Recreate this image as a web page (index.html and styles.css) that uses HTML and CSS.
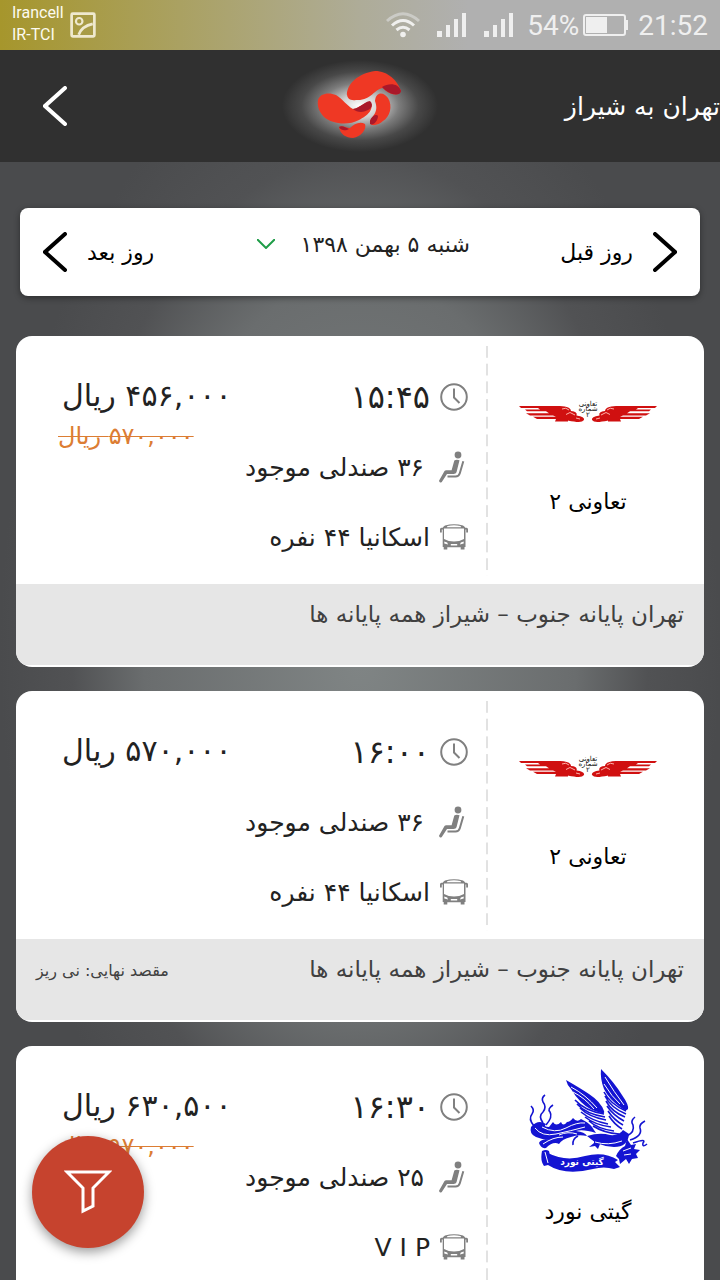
FILE: index.html
```html
<!DOCTYPE html>
<html lang="fa" dir="rtl">
<head>
    <meta charset="UTF-8">
    <meta name="viewport" content="width=device-width, initial-scale=1.0">
    <title>تهران به شیراز</title>
    <link rel="stylesheet" href="styles.css">
</head>
<body>
    <!-- Shared icons -->
    <svg class="sprite" aria-hidden="true">
        <symbol id="icon-clock" viewBox="0 0 28 28">
            <circle cx="14" cy="14" r="12.8" fill="none" stroke="#808080" stroke-width="2"/>
            <path d="M14 5.500V14.500L19.500 20" fill="none" stroke="#808080" stroke-width="2"/>
        </symbol>
        <symbol id="icon-seat" viewBox="0 -1 30 34">
            <g fill="#808080">
                <circle cx="20" cy="4" r="3.400"/>
                <path d="M16.300 9.500Q18.500 8.300 21.500 9.300L18.500 21.200Q18 23 15.500 23H9L3.800 31Q1.500 32.500 1 29.800L6.500 20Q7 19.300 8.300 19.300H13.600Z"/>
            </g>
            <path d="M25.300 10.300L21.800 22.200Q20.800 25.600 17.500 25.600H9.500" fill="none" stroke="#808080" stroke-width="2"/>
        </symbol>
        <symbol id="icon-bus" viewBox="0 0 28 28">
            <path fill="#808080" fill-rule="evenodd" d="M5 2.500Q14 .2 23 2.500Q24.500 3.200 25.300 4.800H26.500Q28 4.800 28 6.300V9.500H26.200V6.600H25.500V24H24.500V26.500H20.700V24.300H7.300V26.500H3.700V24H2.700V6.600H1.800V9.500H0V6.300Q0 4.800 1.500 4.800H2.700Q3.500 3.200 5 2.500ZM7.500 2.900L6.800 4.300H21.200L20.500 2.900Q14 1.600 7.500 2.900ZM4 5.600V16Q8.500 18.500 14 18.500Q19.500 18.500 24 16V5.600ZM4.300 18.600V20.500L8 21.400L7.200 19.400ZM23.700 18.600V20.500L20 21.400L20.800 19.400ZM10.800 21V22.600H17.200V21Z"/>
        </symbol>
        <symbol id="logo-wings" viewBox="0 -5 140 24" overflow="visible">
            <g id="wing" fill="#d01010">
                <path d="M1 3H42Q53 3.500 53 8Q60 8.500 58.500 12.500Q67 13.500 66 17Q64 20 56 18.500Q50 18 47 16H19L15 13.800H38L35 12.400H12L8 10.200H31L28 8.300H9L7 6.600H22L20 5H3Z"/>
                <path d="M38 16H50V18.500H37Z"/>
                <path d="M44 6Q48 4 51 7M48 11.500L52 9.500L57 12M58 15L62 16" fill="none" stroke="#ffb0a8" stroke-width="1"/>
            </g>
            <use href="#wing" transform="matrix(-1 0 0 1 140 0)"/>
            <text x="70" y="3" class="wings-text">تعاونی</text>
            <text x="70" y="8" class="wings-text">شماره</text>
            <text x="70" y="14" class="wings-text">۲</text>
        </symbol>
        <symbol id="logo-phoenix" viewBox="0 0 120 106">
            <g fill="#1414d2">
                <!-- wings -->
                <path d="M38 13Q52 21 61 27Q73 35 76 44Q77 47 73 46Q61 43 53 35Q47 29 43 22Q39 18 38 13Z"/>
                <path d="M73 2Q86 15 94 28Q101 38 100 42Q98 45 92 40Q81 32 76 22Q72 12 73 2Z"/>
                <!-- body, head and claw -->
                <path d="M59 69Q72 65 82 68Q91 69 95 63L101 67Q100 80 86 80Q71 80 59 69Z"/>
                <path d="M88 89Q91 82 97 79L99 72L103 78L108 77L106 82L112 83L108 87L110 91L104 92L101 97L98 92L92 97L91 92Z"/>
                <path d="M66 73L72 77L70 82L67 79L61 80L66 76Z"/>
                <!-- banner -->
                <path d="M20 86Q37 95 57 89Q76 84 90 93L87 95L92 100L86 102Q76 99 65 102Q37 109 20 98L16 99Q12 94 14 84Q18 82 21 84L24 97Q21 93 20 86Z"/>
                <!-- tail plume -->
                <path d="M3 60Q10 52 18 57Q15 60 21 60L25 55Q28 60 33 55Q35 60 39 55Q42 55 45 51Q49 56 53 52Q60 55 64 60L68 66Q55 62 48 64Q57 65 59 69Q50 67 43 70Q34 72 31 77Q25 74 18 81Q13 82 11 76Q13 71 22 73Q15 73 8 70Q1 67 3 60Z"/>
            </g>
            <g fill="none" stroke="#fff" stroke-width="1">
                <path d="M7 61Q14 70 28 67T57 60M14 60Q27 67 38 61T57 56M15 77Q25 70 35 70M31 68Q40 64 49 67M67 75Q80 79 94 74M95 84L103 81M96 88L103 87M17 85L20 96"/>
                <path d="M43 20Q58 28 69 41M45 25Q57 31 66 42M77 10Q86 25 96 38M76 17Q84 30 92 37"/>
            </g>
            <g fill="none" stroke="#1414d2" stroke-width="1.600">
                <path d="M47 33Q57 44 76 47M49 37Q58 47 77 50M52 41Q61 50 78 53M53 45Q64 54 80 57M57 50Q67 58 83 60M61 54Q70 62 86 64M65 59Q76 66 91 67"/>
                <path d="M76 25Q82 37 98 44M77 29Q83 41 98 47M78 34Q84 45 97 50M79 39Q85 48 96 54M80 44Q86 53 95 58M81 49Q86 57 94 62"/>
                <path d="M15 56Q10 49 15 45Q19 40 15 35Q13 31 17 28M18 58Q25 50 22 45Q19 42 25 38M6 59Q0 52 4 47Q7 43 3 39"/>
                <path d="M99 69Q107 65 105 58Q102 54 107 50M102 73Q115 69 112 61Q111 57 117 54M105 76Q119 71 115 76Q114 81 119 77M50 69Q44 72 45 78"/>
            </g>
            <text x="54" y="98" class="phoenix-text">گیتی نورد</text>
        </symbol>
    </svg>

    <div class="status-bar" dir="ltr">
        <div class="carriers">
            <span>Irancell</span>
            <span>IR-TCI</span>
        </div>
        <svg class="shot-icon" width="26" height="26" viewBox="0 0 24 24" fill="none" stroke="#efe9cf">
            <rect x="1.500" y="1.500" width="21" height="21" rx="1" stroke-width="2.500"/>
            <circle cx="8.500" cy="8.500" r="3" stroke-width="2"/>
            <path d="M8 21Q11 13 21 11" stroke-width="2.500"/>
        </svg>
        <div class="indicators">
            <svg width="34" height="26" viewBox="0 0 34 26" fill="none" stroke="#f0f0ee" stroke-width="3">
                <path d="M1 9Q17 -5.500 33 9" stroke="#cbcbc6"/>
                <path d="M6 13.500Q17 3.500 28 13.500M10.500 18Q17 12.500 23.500 18"/>
                <circle cx="17" cy="22.500" r="2.800" fill="#f0f0ee" stroke="none"/>
            </svg>
            <svg width="30" height="26" viewBox="0 0 30 26" fill="#efefef">
                <path d="M0 19h5v6H0zM9 13h4v12H9zM17 7h4v18h-4zM25 1h4v24h-4z"/>
            </svg>
            <svg width="30" height="26" viewBox="0 0 30 26" fill="#efefef">
                <path d="M0 19h5v6H0zM9 13h4v12H9zM17 7h4v18h-4zM25 1h4v24h-4z"/>
            </svg>
            <div class="battery">
                <span>54%</span>
                <svg width="46" height="22" viewBox="0 0 46 22">
                    <rect x="1" y="1" width="41" height="20" rx="2" fill="none" stroke="#efefef" stroke-width="2"/>
                    <path d="M3 3h21v16H3zM43 6h2v10h-2z" fill="#efefef"/>
                </svg>
            </div>
            <span>21:52</span>
        </div>
    </div>

    <header class="header">
        <h1>تهران به شیراز</h1>
        <svg class="brand" width="160" height="96" viewBox="0 0 160 96">
            <defs>
                <radialGradient id="glow">
                    <stop offset="0" stop-color="#fff"/>
                    <stop offset=".25" stop-color="#d0d0d0"/>
                    <stop offset=".5" stop-color="#7c7c7c"/>
                    <stop offset=".75" stop-color="#484848"/>
                    <stop offset="1" stop-color="#303030"/>
                </radialGradient>
            </defs>
            <ellipse cx="80" cy="48" rx="78" ry="46" fill="url(#glow)"/>
            <g fill="#ef3824" transform="translate(0 2)">
                <path d="M38 41C40 34 49 33 56 36C63 40 67 47 73 50C80 49 84 43 90 43C95 50 87 57 79 61C68 67 52 65 44 58C39 53 37 47 38 41Z" transform="translate(0 -1)"/>
                <path d="M67 36C66 24 79 13 95 11C108 11 118 21 121 31C119 37 109 35 103 28C94 29 91 41 76 40C70 41 67 38 67 34Z"/>
                <path d="M95 41C96 31 104 32 108 38C113 46 110 57 103 61C98 66 89 67 90 61C93 55 99 52 95 41Z"/>
                <path d="M59 67C62 65 66 68 70 68C74 64 80 61 85 64C87 69 81 77 73 78C66 78 60 74 59 67Z"/>
            </g>
            <g fill="#a9182a" transform="translate(0 1)">
                <path d="M73 50C80 49 84 43 90 42C95 47 90 52 81 53C78 53 75 52 73 50Z"/>
                <path d="M102 28C109 24 118 24 121 32C120 38 109 36 102 28Z"/>
                <path d="M90 62C92 56 97 55 98 57C98 62 93 67 90 65Z"/>
                <path d="M59 68C62 66 65 68 69 70C66 72 61 72 59 68Z"/>
            </g>
        </svg>
        <button class="icon-button back" type="button" aria-label="بازگشت">
            <svg width="24" height="40" viewBox="0 0 24 40"><path d="M22 2L2 20L22 38"/></svg>
        </button>
    </header>

    <main>
        <nav class="day-bar">
            <button class="icon-button day" type="button">
                <svg width="24" height="40" viewBox="0 0 24 40"><path d="M2 2L22 20L2 38"/></svg>
                روز قبل
            </button>
            <button class="icon-button date" type="button">
                شنبه ۵ بهمن ۱۳۹۸
                <svg width="18" height="10" viewBox="0 0 18 10"><path d="M0 0L9 9L18 0"/></svg>
            </button>
            <button class="icon-button day" type="button">
                روز بعد
                <svg width="24" height="40" viewBox="0 0 24 40"><path d="M22 2L2 20L22 38"/></svg>
            </button>
        </nav>

        <article class="card">
            <div class="card-body">
                <div class="company">
                    <svg class="company-logo"><use href="#logo-wings"/></svg>
                    <h2>تعاونی ۲</h2>
                </div>
                <ul class="details">
                    <li class="time"><svg><use href="#icon-clock"/></svg>۱۵:۴۵</li>
                    <li class="seats"><svg><use href="#icon-seat"/></svg>۳۶ صندلی موجود</li>
                    <li><svg><use href="#icon-bus"/></svg>اسکانیا ۴۴ نفره</li>
                </ul>
                <div class="prices">
                    <span class="price">۴۵۶,۰۰۰ ریال</span>
                    <del>۵۷۰,۰۰۰ ریال</del>
                </div>
            </div>
            <footer>
                <span class="route">تهران پایانه جنوب – شیراز همه پایانه ها</span>
            </footer>
        </article>

        <article class="card">
            <div class="card-body">
                <div class="company">
                    <svg class="company-logo"><use href="#logo-wings"/></svg>
                    <h2>تعاونی ۲</h2>
                </div>
                <ul class="details">
                    <li class="time"><svg><use href="#icon-clock"/></svg>۱۶:۰۰</li>
                    <li class="seats"><svg><use href="#icon-seat"/></svg>۳۶ صندلی موجود</li>
                    <li><svg><use href="#icon-bus"/></svg>اسکانیا ۴۴ نفره</li>
                </ul>
                <div class="prices">
                    <span class="price">۵۷۰,۰۰۰ ریال</span>
                </div>
            </div>
            <footer>
                <span class="route">تهران پایانه جنوب – شیراز همه پایانه ها</span>
                <span class="final">مقصد نهایی: نی ریز</span>
            </footer>
        </article>

        <article class="card">
            <div class="card-body">
                <div class="company">
                    <svg class="company-logo"><use href="#logo-phoenix"/></svg>
                    <h2>گیتی نورد</h2>
                </div>
                <ul class="details">
                    <li class="time"><svg><use href="#icon-clock"/></svg>۱۶:۳۰</li>
                    <li class="seats"><svg><use href="#icon-seat"/></svg>۲۵ صندلی موجود</li>
                    <li><svg><use href="#icon-bus"/></svg>V I P</li>
                </ul>
                <div class="prices">
                    <span class="price">۶۳۰,۵۰۰ ریال</span>
                    <del>۹۷۰,۰۰۰ ریال</del>
                </div>
            </div>
        </article>
    </main>

    <button class="filter" type="button" aria-label="فیلتر">
        <svg width="48" height="44" viewBox="0 0 48 44"><path d="M3 2H45L29 18V36L19 41V18Z"/></svg>
    </button>
</body>
</html>
```
FILE: styles.css
```css
* {
    box-sizing: border-box;
}

body {
    margin: 0;
    font-family: 'DejaVu Sans', sans-serif;
    font-size: 24px;
    color: #222;
    background: radial-gradient(ellipse 50% 620px at 50% 650px, #808585, #6a6d6e 60%, #515254 80%, #4a4b4d) fixed;
    overflow-x: hidden;
}

.sprite {
    display: none;
}

/* Status bar */
.status-bar {
    height: 50px;
    padding: 0 12px;
    display: flex;
    align-items: center;
    gap: 6px;
    background: linear-gradient(90deg, #a6962c, #aeac98 50%, #b0b0b0 65%);
    color: #efefef;
    font-family: Roboto, sans-serif;
    font-size: 28px;
}

.carriers {
    display: flex;
    flex-direction: column;
    padding-bottom: 2px;
    font-size: 16px;
    line-height: 22px;
    color: #fdfbf0;
}

.indicators {
    margin-left: auto;
    display: flex;
    align-items: center;
    gap: 17px;
}

.indicators > span {
    margin-left: -8px;
}

.battery {
    display: flex;
    align-items: center;
    gap: 4px;
    margin-left: -4px;
}

/* Header */
.header {
    height: 112px;
    display: grid;
    grid-template-columns: 1fr auto 1fr;
    align-items: center;
    background: #303030;
    color: #fff;
}

.header h1 {
    margin: 0;
    font-size: 25px;
    font-weight: 400;
    white-space: nowrap;
}

.icon-button {
    padding: 0;
    border: 0;
    background: none;
    color: #000;
    font: inherit;
    font-size: 22px;
    display: flex;
    align-items: center;
    cursor: pointer;
}

.icon-button path {
    fill: none;
    stroke: currentColor;
    stroke-width: 4;
    stroke-linecap: round;
}

.back {
    justify-self: end;
    margin-left: 43px;
    color: #fff;
}

main {
    padding: 46px 16px 24px;
}

/* Day switcher */
.day-bar {
    height: 88px;
    margin: 0 4px 40px;
    padding: 0 23px;
    display: flex;
    justify-content: space-between;
    background: #fff;
    border-radius: 8px;
    box-shadow: 0 2px 6px rgba(0, 0, 0, 0.4);
}

.day {
    gap: 20px;
}

.date {
    gap: 26px;
    padding: 0 0 16px 12px;
    color: #222;
}

.date path {
    stroke: #1f9d48;
    stroke-width: 2;
}

/* Bus cards */
.card {
    margin-bottom: 24px;
    padding-bottom: 2px;
    background: #fff;
    border-radius: 16px;
    overflow: hidden;
}

.card-body {
    height: 248px;
    display: flex;
}

.company {
    width: 216px;
    padding: 16px 16px 0 0;
    display: flex;
    flex-direction: column;
    align-items: center;
}

.company-logo {
    width: 140px;
    height: 120px;
    padding: 5px 0 9px;
}

.company h2 {
    margin: 16px 0 0;
    font-size: 22px;
    line-height: 28px;
    font-weight: 400;
    color: #000;
}

.details {
    flex: 1;
    margin: 10px 0 8px;
    padding: 16px 20px 0 0;
    list-style: none;
    background: linear-gradient(#e2e2e2 68%, transparent 0) right top / 2px calc(100% / 13);
    background-repeat: repeat-y;
}

.details li {
    height: 70px;
    display: flex;
    align-items: center;
    gap: 10px;
    font-size: 25px;
    white-space: nowrap;
}

.details svg {
    width: 28px;
    height: 28px;
}

.details .time {
    font-size: 32px;
}

.details .seats {
    gap: 14px;
}

.details .seats svg {
    width: 30px;
    height: 34px;
}

.prices {
    padding: 40px 0 0 42px;
    display: flex;
    flex-direction: column;
    align-items: flex-end;
    white-space: nowrap;
}

.price {
    padding-left: 4px;
    font-size: 30px;
    line-height: 40px;
}

.prices del {
    line-height: 40px;
    color: #dc7d33;
    text-decoration-thickness: 1px;
}

.card footer {
    height: 81px;
    padding: 10px 20px 0;
    display: flex;
    justify-content: space-between;
    background: #e6e6e6;
    color: #404040;
    line-height: 40px;
}

.route {
    font-size: 23px;
}

.final {
    font-size: 16px;
    line-height: 44px;
}

/* Filter button */
.filter {
    position: fixed;
    left: 32px;
    bottom: 32px;
    width: 112px;
    height: 112px;
    padding: 0;
    border: 0;
    border-radius: 50%;
    background: #c6432e;
    box-shadow: 0 4px 12px rgba(0, 0, 0, 0.4);
    display: flex;
    align-items: center;
    justify-content: center;
    cursor: pointer;
}

.filter path {
    fill: none;
    stroke: #fff;
    stroke-width: 3;
}

/* Lettering inside the company logos */
.wings-text {
    font-size: 7px;
    text-anchor: middle;
    fill: #111;
}

.phoenix-text {
    font-size: 9px;
    font-weight: 700;
    text-anchor: middle;
    fill: #fff;
}
```
